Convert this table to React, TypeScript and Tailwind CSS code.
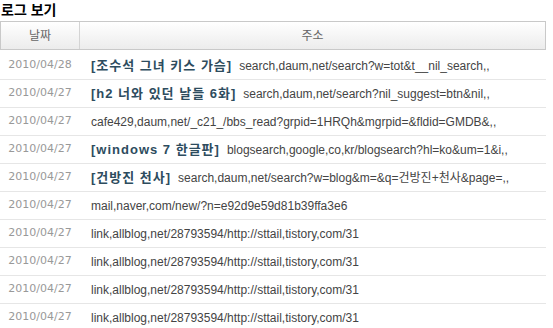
const rows: { date: string; tag?: string; url: string }[] = [
  { date: "2010/04/28", tag: "[조수석 그녀 키스 가슴]", url: "search,daum,net/search?w=tot&t__nil_search,," },
  { date: "2010/04/27", tag: "[h2 너와 있던 날들 6화]", url: "search,daum,net/search?nil_suggest=btn&nil,," },
  { date: "2010/04/27", url: "cafe429,daum,net/_c21_/bbs_read?grpid=1HRQh&mgrpid=&fldid=GMDB&,," },
  { date: "2010/04/27", tag: "[windows 7 한글판]", url: "blogsearch,google,co,kr/blogsearch?hl=ko&um=1&i,," },
  { date: "2010/04/27", tag: "[건방진 천사]", url: "search,daum,net/search?w=blog&m=&q=건방진+천사&page=,," },
  { date: "2010/04/27", url: "mail,naver,com/new/?n=e92d9e59d81b39ffa3e6" },
  { date: "2010/04/27", url: "link,allblog,net/28793594/http://sttail,tistory,com/31" },
  { date: "2010/04/27", url: "link,allblog,net/28793594/http://sttail,tistory,com/31" },
  { date: "2010/04/27", url: "link,allblog,net/28793594/http://sttail,tistory,com/31" },
  { date: "2010/04/27", url: "link,allblog,net/28793594/http://sttail,tistory,com/31" },
];

export default function App() {
  return (
    <div className="h-[328px] w-[553px] overflow-hidden bg-white font-['Liberation_Sans','Noto_Sans_CJK_KR',sans-serif]">
      <h1 className="pt-[2px] pl-[1px] text-[14px] leading-[17px] font-bold text-black">로그 보기</h1>
      <div className="w-[546px]">
        <div className="mt-[2px] flex h-[29px] border border-[#c9c9c9] bg-gradient-to-b from-white to-[#ececec] text-[12px] text-[#666]">
          <div className="flex w-[79px] items-center justify-center border-r border-[#d4d4d4]">날짜</div>
          <div className="flex flex-1 items-center justify-center">주소</div>
        </div>
        <div className="mt-[2px]">
          {rows.map((r, i) => (
            <div key={i} className="flex h-[28px] items-center border-b border-[#e6e6e6]">
              <div className="w-[80px] text-center font-['DejaVu_Sans',sans-serif] text-[11px] text-[#999]">{r.date}</div>
              <div className="flex-1 truncate pl-[11px] text-[12px] text-[#444]">
                {r.tag && (
                  <span className="mr-[7px] text-[13px] font-bold tracking-[1px] text-[#2d4c5e]">{r.tag}</span>
                )}
                {r.url}
              </div>
            </div>
          ))}
        </div>
      </div>
    </div>
  );
}
